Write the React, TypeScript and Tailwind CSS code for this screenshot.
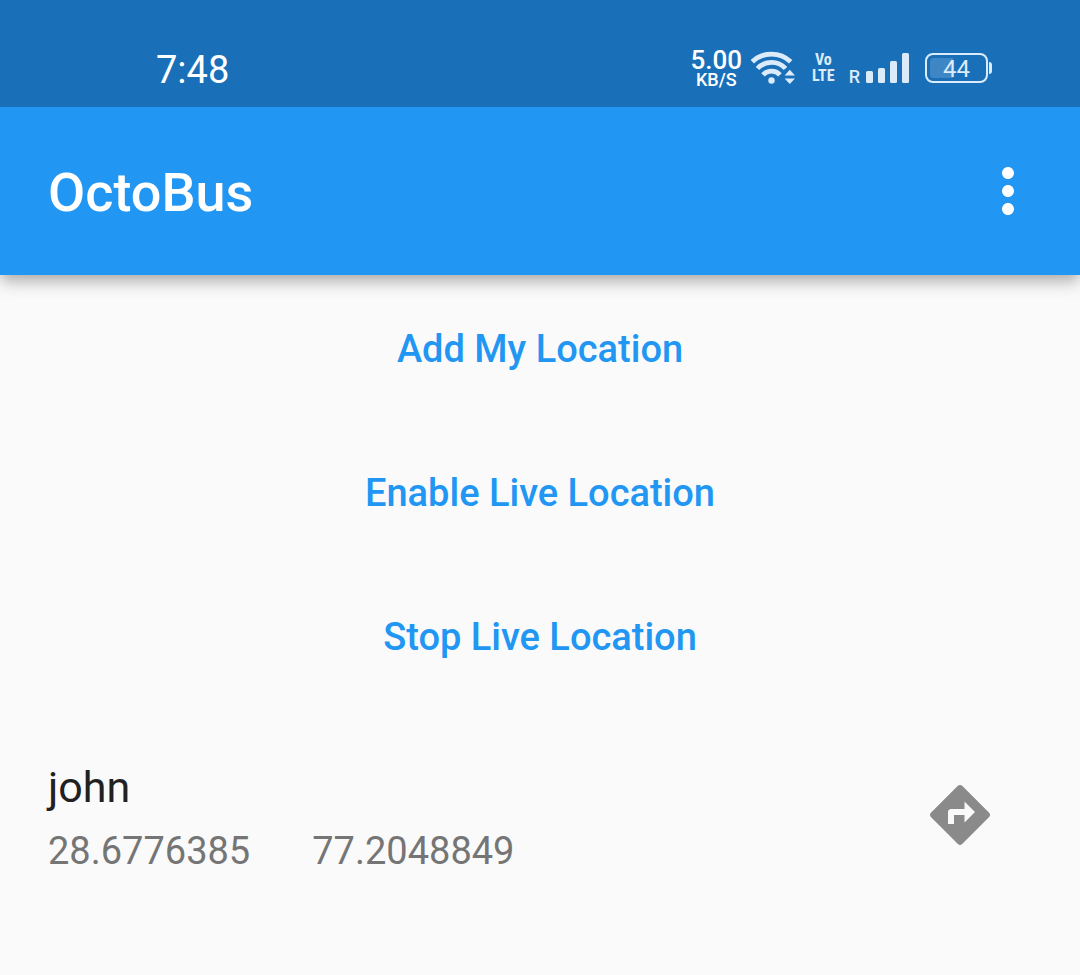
import React from "react";
import { MdMoreVert } from "react-icons/md";

function WifiIcon() {
  return (
    <svg width="46" height="36" viewBox="0 0 46 36" fill="none" aria-label="Wi-Fi" role="img">
      <g stroke="#dcebfa" strokeWidth="4.8">
        <path d="M2.3 11.7a28 28 0 0 1 38.4 0" />
        <path d="M7.5 18.5a19 19 0 0 1 28 0" />
        <path d="M13 24.9a11.6 11.6 0 0 1 17 0" />
      </g>
      <circle cx="21.5" cy="30.5" r="3.2" fill="#dcebfa" />
      <path d="M39.8 19.8L45 25.5H34.6zM39.8 34.1L34.6 28.5H45z" fill="#dcebfa" />
    </svg>
  );
}

function SignalIcon() {
  return (
    <svg width="43" height="30" viewBox="0 0 43 30" fill="#dcebfa" aria-label="Signal" role="img">
      <rect x="0" y="18" width="7" height="12" rx="1.5" />
      <rect x="12" y="15" width="7" height="15" rx="1.5" />
      <rect x="24" y="8" width="7" height="22" rx="1.5" />
      <rect x="36" y="0" width="7" height="30" rx="1.5" />
    </svg>
  );
}

function Battery({ level }: { level: number }) {
  return (
    <div className="flex items-center gap-px">
      <div className="relative flex h-[30px] w-[63px] items-center justify-center rounded-lg border-2 border-[#dcebfa]">
        <div className="absolute inset-[3px]">
          <div className="h-full rounded-l-sm bg-[#3f86c5]" style={{ width: `${level}%` }} />
        </div>
        <span className="relative pt-0.5 text-2xl leading-none text-[#dcebfa]">{level}</span>
      </div>
      <div className="h-3 w-[3px] rounded-r-sm bg-[#dcebfa]" />
    </div>
  );
}

function StatusBar() {
  return (
    <div className="relative z-10 flex h-[107px] items-end justify-between bg-[#1a70b8] pr-22 pb-[17px] pl-39 text-white">
      <span className="text-[38px] leading-10">7:48</span>
      <div className="flex h-11 items-center">
        <div className="flex flex-col items-center pt-1 font-medium">
          <span className="text-[26px] leading-5">5.00</span>
          <span className="text-lg leading-5">KB/S</span>
        </div>
        <div className="ml-2">
          <WifiIcon />
        </div>
        <div className="ml-4 flex flex-col items-center font-['Liberation_Sans_Narrow','Roboto_Condensed','Roboto',sans-serif] text-base leading-4 font-bold text-[#dcebfa]">
          <span>Vo</span>
          <span>LTE</span>
        </div>
        <div className="ml-3.5 flex items-end gap-1.5">
          <span className="text-lg leading-3 font-medium text-[#dcebfa]">R</span>
          <SignalIcon />
        </div>
        <div className="ml-4">
          <Battery level={44} />
        </div>
      </div>
    </div>
  );
}

function DirectionsIcon() {
  return (
    <svg width="72" height="72" viewBox="0 0 24 24" fill="#8a8a8a" aria-hidden="true">
      <path d="M21.71 11.29l-9-9c-.39-.39-1.02-.39-1.41 0l-9 9c-.39.39-.39 1.02 0 1.41l9 9c.39.39 1.02.39 1.41 0l9-9c.39-.38.39-1.01 0-1.41zM13.5 14.5V12H10v3H8v-4c0-.55.45-1 1-1h4.5V7.5L17 11l-3.5 3.5z" />
    </svg>
  );
}

const actions = ["Add My Location", "Enable Live Location", "Stop Live Location"];

export default function App() {
  return (
    <div className="min-h-screen bg-[#fafafa] font-['Roboto',sans-serif]">
      <StatusBar />
      <header className="flex h-42 items-center justify-between bg-[#2196f3] pr-9 pl-12 text-white shadow-[0_6px_12px_-3px_rgba(0,0,0,0.2),0_10px_15px_rgba(0,0,0,0.12),0_3px_24px_rgba(0,0,0,0.06)]">
        <h1 className="pt-1 text-[54px] leading-16 font-medium">OctoBus</h1>
        <button type="button" aria-label="More options">
          <MdMoreVert className="size-18" />
        </button>
      </header>
      <main>
        <div className="flex flex-col items-center">
          {actions.map((label) => (
            <button key={label} type="button" className="h-36 px-6 pt-1 text-[38px] font-medium text-[#2196f3]">
              {label}
            </button>
          ))}
        </div>
        <ul>
          <li className="flex h-54 items-center justify-between px-12">
            <div className="flex flex-col gap-2 pt-2">
              <span className="text-[43px] leading-14 text-[#212121]">john</span>
              <div className="flex gap-[62px] text-[38px] leading-14 text-[#757575]">
                <span>28.6776385</span>
                <span>77.2048849</span>
              </div>
            </div>
            <button type="button" aria-label="Directions" className="flex size-36 items-center justify-center">
              <DirectionsIcon />
            </button>
          </li>
        </ul>
      </main>
    </div>
  );
}
